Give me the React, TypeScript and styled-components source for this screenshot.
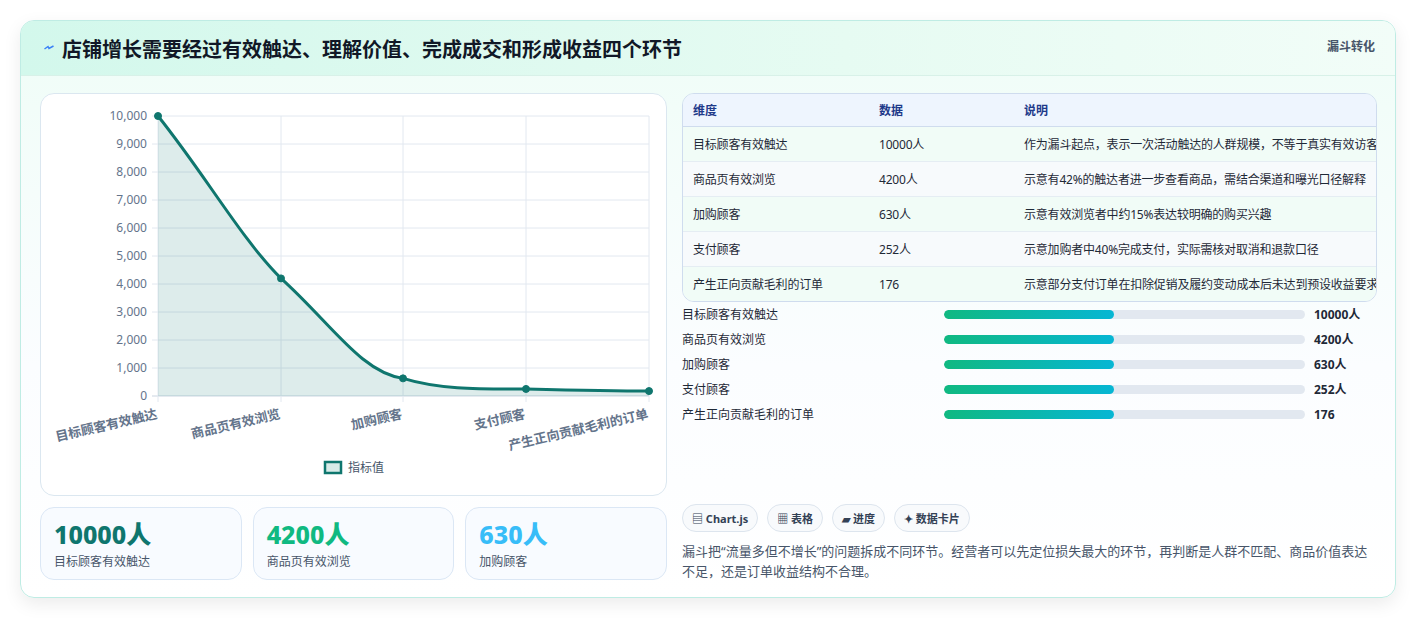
import React from "react";
import styled, { createGlobalStyle } from "styled-components";

const Global = createGlobalStyle`
  body {
    margin: 0;
    background: #ffffff;
    font-family: "Noto Sans", "Noto Sans CJK SC", sans-serif;
  }
`;

const Page = styled.div`
  padding: 20px 21px 22px 20px;
`;

const Card = styled.div`
  width: 1376px;
  height: 578px;
  box-sizing: border-box;
  border: 1px solid #bfece4;
  border-radius: 14px;
  background: linear-gradient(180deg, #effdf7 0%, #fbfdff 60%, #ffffff 100%);
  box-shadow: 0 6px 18px rgba(0, 0, 0, 0.08);
  overflow: hidden;
  display: flex;
  flex-direction: column;
`;

const Header = styled.div`
  height: 55px;
  box-sizing: border-box;
  padding: 0 20px 0 22px;
  display: flex;
  align-items: center;
  justify-content: space-between;
  background: linear-gradient(90deg, #d3f8ec 0%, #e6fbf2 60%, #f2fdf8 100%);
  border-bottom: 1px solid #d8f1e8;
`;

const Title = styled.h1`
  margin: 0;
  font-size: 20px;
  font-weight: 700;
  color: #111827;
  display: flex;
  align-items: center;
  gap: 7px;
`;

const Tag = styled.span`
  align-self: flex-start;
  margin-top: 16px;
  font-size: 12px;
  font-weight: 700;
  color: #475569;
`;

const Body = styled.div`
  flex: 1;
  display: grid;
  grid-template-columns: 627px 695px;
  gap: 15px;
  padding: 17px 18px 16px 19px;
`;

const LeftCol = styled.div`
  display: flex;
  flex-direction: column;
  gap: 11px;
`;

const ChartCard = styled.div`
  height: 403px;
  box-sizing: border-box;
  border: 1px solid #dbe7f0;
  border-radius: 14px;
  background: #ffffff;
`;

const Kpis = styled.div`
  display: grid;
  grid-template-columns: repeat(3, 1fr);
  gap: 11px;
`;

const Kpi = styled.div`
  height: 73px;
  box-sizing: border-box;
  border: 1px solid #dbe7f5;
  border-radius: 14px;
  background: #f8fbff;
  padding: 10px 13px;
`;

const KpiValue = styled.div<{ $c: string }>`
  font-size: 25px;
  font-weight: 800;
  line-height: 32px;
  color: ${(p) => p.$c};
`;

const KpiLabel = styled.div`
  font-size: 12px;
  color: #475569;
  margin-top: 2px;
`;

const RightCol = styled.div`
  display: flex;
  flex-direction: column;
`;

const Table = styled.table`
  width: 100%;
  table-layout: fixed;
  border-collapse: separate;
  border-spacing: 0;
  border: 1px solid #cfdcee;
  border-radius: 12px;
  overflow: hidden;
  font-size: 12px;
  color: #1f2937;
`;

const Th = styled.th<{ $w?: number }>`
  text-align: left;
  font-weight: 600;
  color: #1e3a8a;
  background: #eef5fe;
  height: 32px;
  padding: 0 10px;
  width: ${(p) => (p.$w ? `${p.$w}px` : "auto")};
  border-bottom: 1px solid #cfdcee;
`;

const Tr = styled.tr<{ $alt: boolean }>`
  background: ${(p) => (p.$alt ? "#f7fafc" : "#f1fcf7")};
`;

const Td = styled.td<{ $last: boolean }>`
  height: 34px;
  padding: 0 10px;
  white-space: nowrap;
  overflow: hidden;
  letter-spacing: -0.2px;
  border-bottom: ${(p) => (p.$last ? "none" : "1px solid #e5edf3")};
`;

const Bars = styled.div`
  display: flex;
  flex-direction: column;
  gap: 7px;
  margin-top: 3px;
`;

const BarRow = styled.div`
  display: grid;
  grid-template-columns: 262px 361px auto;
  align-items: center;
  height: 18px;
  font-size: 12px;
  color: #1f2937;
`;

const Track = styled.div`
  height: 9px;
  border-radius: 5px;
  background: #e2e8f0;
  overflow: hidden;
`;

const Fill = styled.div`
  height: 100%;
  border-radius: 5px;
  background: linear-gradient(90deg, #10b981, #06b6d4);
`;

const BarValue = styled.span`
  padding-left: 9px;
  font-weight: 700;
`;

const Pills = styled.div`
  margin-top: auto;
  display: flex;
  gap: 9px;
`;

const Pill = styled.span`
  height: 28px;
  box-sizing: border-box;
  padding: 0 9px;
  display: inline-flex;
  align-items: center;
  gap: 3px;
  border: 1px solid #dde5ee;
  border-radius: 14px;
  background: #f8fafc;
  font-size: 11px;
  font-weight: 700;
  color: #334155;
`;

const Note = styled.p`
  margin: 9px 0 0;
  font-size: 13px;
  line-height: 20px;
  color: #475569;
`;

const rows = [
  ["目标顾客有效触达", "10000人", "作为漏斗起点，表示一次活动触达的人群规模，不等于真实有效访客"],
  ["商品页有效浏览", "4200人", "示意有42%的触达者进一步查看商品，需结合渠道和曝光口径解释"],
  ["加购顾客", "630人", "示意有效浏览者中约15%表达较明确的购买兴趣"],
  ["支付顾客", "252人", "示意加购者中40%完成支付，实际需核对取消和退款口径"],
  ["产生正向贡献毛利的订单", "176", "示意部分支付订单在扣除促销及履约变动成本后未达到预设收益要求"],
];

const Chart = () => {
  const left = 117;
  const right = 608;
  const top = 22;
  const base = 302;
  const xs = [117, 240, 362, 485, 608];
  const vals = [10000, 4200, 630, 252, 176];
  const ys = vals.map((v) => base - (v / 10000) * (base - top));
  const path =
    `M${xs[0]},${ys[0]} C165,${ys[0] + 60} 200,${ys[1] - 40} ${xs[1]},${ys[1]} ` +
    `C290,${ys[1] + 45} 320,${ys[2] - 6} ${xs[2]},${ys[2]} ` +
    `C400,${ys[3] + 1} 440,${ys[3]} ${xs[3]},${ys[3]} ` +
    `C530,${ys[4] - 1} 570,${ys[4]} ${xs[4]},${ys[4]}`;
  const labels = ["目标顾客有效触达", "商品页有效浏览", "加购顾客", "支付顾客", "产生正向贡献毛利的订单"];
  return (
    <svg width="625" height="401" viewBox="0 0 625 401" style={{ display: "block" }}>
      {Array.from({ length: 11 }).map((_, i) => {
        const y = base - i * 28;
        return (
          <g key={i}>
            <line x1={left - 6} x2={right} y1={y} y2={y} stroke={i === 0 ? "#cbd5e1" : "#e2e8f0"} />
            <text x={left - 11} y={y + 4} fontSize="12" fill="#64748b" textAnchor="end" fontFamily="Noto Sans">
              {(i * 1000).toLocaleString("en-US")}
            </text>
          </g>
        );
      })}
      {xs.map((x) => (
        <line key={x} x1={x} x2={x} y1={top} y2={base + 6} stroke="#e2e8f0" />
      ))}
      <path d={`${path} L${right},${base} L${left},${base} Z`} fill="rgba(15,118,110,0.14)" />
      <path d={path} fill="none" stroke="#0f766e" strokeWidth="3" />
      {xs.map((x, i) => (
        <circle key={x} cx={x} cy={ys[i]} r="3.5" fill="#0f766e" stroke="#0f766e" strokeWidth="1" />
      ))}
      {labels.map((l, i) => (
        <text
          key={l}
          x={xs[i]}
          y={base + 22}
          fontSize="13"
          fill="#64748b"
          fontWeight="600"
          textAnchor="end"
          transform={`rotate(-13 ${xs[i]} ${base + 22})`}
          fontFamily="Noto Sans, Noto Sans CJK SC"
        >
          {l}
        </text>
      ))}
      <rect x="284" y="368" width="16" height="11" fill="#d8ebe8" stroke="#0f766e" strokeWidth="2.5" />
      <text x="307" y="378" fontSize="12" fill="#475569" fontFamily="Noto Sans, Noto Sans CJK SC">
        指标值
      </text>
    </svg>
  );
};

export default function App() {
  return (
    <Page>
      <Global />
      <Card>
        <Header>
          <Title>
            <svg width="12" height="12" viewBox="0 0 24 24">
              <path d="M3 14 L10 9 L12 13 L21 8" fill="none" stroke="#3b82f6" strokeWidth="3" />
            </svg>
            店铺增长需要经过有效触达、理解价值、完成成交和形成收益四个环节
          </Title>
          <Tag>漏斗转化</Tag>
        </Header>
        <Body>
          <LeftCol>
            <ChartCard>
              <Chart />
            </ChartCard>
            <Kpis>
              <Kpi>
                <KpiValue $c="#0f766e">10000人</KpiValue>
                <KpiLabel>目标顾客有效触达</KpiLabel>
              </Kpi>
              <Kpi>
                <KpiValue $c="#10b981">4200人</KpiValue>
                <KpiLabel>商品页有效浏览</KpiLabel>
              </Kpi>
              <Kpi>
                <KpiValue $c="#38bdf8">630人</KpiValue>
                <KpiLabel>加购顾客</KpiLabel>
              </Kpi>
            </Kpis>
          </LeftCol>
          <RightCol>
            <Table>
              <thead>
                <tr>
                  <Th $w={166}>维度</Th>
                  <Th $w={125}>数据</Th>
                  <Th>说明</Th>
                </tr>
              </thead>
              <tbody>
                {rows.map((r, i) => (
                  <Tr key={r[0]} $alt={i % 2 === 1}>
                    {r.map((c) => (
                      <Td key={c} $last={i === rows.length - 1}>
                        {c}
                      </Td>
                    ))}
                  </Tr>
                ))}
              </tbody>
            </Table>
            <Bars>
              {rows.map((r) => (
                <BarRow key={r[0]}>
                  <span>{r[0]}</span>
                  <Track>
                    <Fill style={{ width: "47%" }} />
                  </Track>
                  <BarValue>{r[1]}</BarValue>
                </BarRow>
              ))}
            </Bars>
            <Pills>
              <Pill>▤ Chart.js</Pill>
              <Pill>▦ 表格</Pill>
              <Pill>▰ 进度</Pill>
              <Pill>✦ 数据卡片</Pill>
            </Pills>
            <Note>
              漏斗把“流量多但不增长”的问题拆成不同环节。经营者可以先定位损失最大的环节，再判断是人群不匹配、商品价值表达不足，还是订单收益结构不合理。
            </Note>
          </RightCol>
        </Body>
      </Card>
    </Page>
  );
}
